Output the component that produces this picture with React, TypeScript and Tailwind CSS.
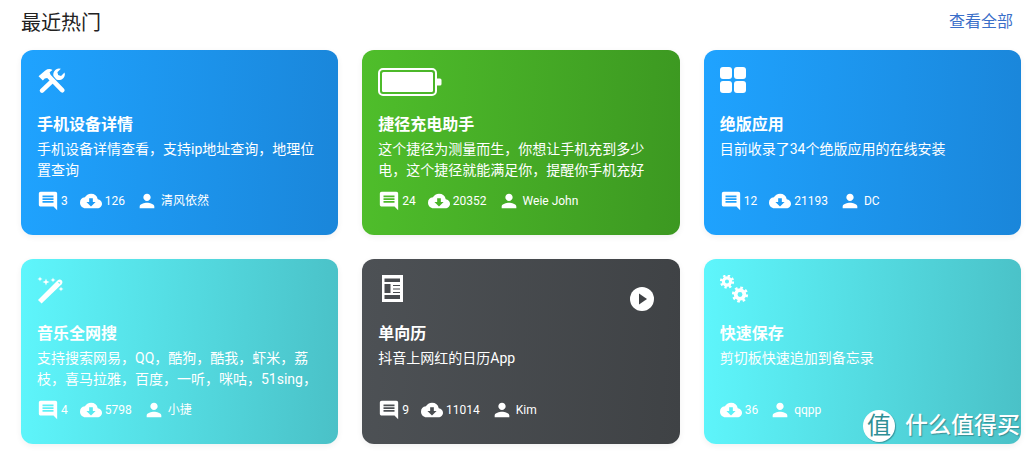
import React from 'react';
import { MdCloudDownload, MdComment, MdPerson } from 'react-icons/md';

const blue = 'bg-[linear-gradient(93deg,#1fa3ff,#1a86da)]';
const green = 'bg-[linear-gradient(93deg,#4fbe2b,#3c9821)]';
const cyan = 'bg-[linear-gradient(93deg,#5ef6fc,#4ac1c7)]';
const dark = 'bg-[linear-gradient(93deg,#4d5155,#3f4245)]';

function ToolsIcon() {
  return (
    <svg className="mt-0.5" width="30" height="25" viewBox="0 0 30 26" fill="white">
      <path d="M1 8.5 8 2.5C10.5.8 13.5.8 15.5 2L12.5 4.5 13.5 7 27.5 21.5C28.5 22.8 28.3 24 27.2 25 26 26 24.8 25.8 23.8 24.8L10 10.5 7.5 11 5.5 13Z" />
      <path d="M2.8 22 14.5 10.8 17.8 14.2 6.2 25.3C5 26.2 3.8 26 3 25.2 2 24.2 1.9 23 2.8 22Z" />
      <path d="M16.5 8.2C15.8 4.5 18.2 1 22.2.6L24.2.8 20.6 4.4 21.4 7.4 24.4 8.2 28 4.6 28.4 6.4C28.2 10.4 24.8 13 21 12.4L19.5 12Z" />
    </svg>
  );
}

function BatteryIcon() {
  return (
    <svg className="mt-0.5" width="64" height="28" viewBox="0 0 64 28">
      <rect x="1" y="1" width="57" height="26" rx="4" fill="none" stroke="white" strokeWidth="2" />
      <rect x="4" y="4" width="51" height="20" rx="1.5" fill="white" />
      <rect x="57.5" y="10.5" width="6" height="7" rx="1.5" fill="white" />
    </svg>
  );
}

function AppsIcon() {
  return (
    <div className="mt-px grid w-[26px] grid-cols-2 gap-[2px]">
      <div className="h-3 rounded-[3px] bg-white" />
      <div className="h-3 rounded-[3px] bg-white" />
      <div className="h-3 rounded-[3px] bg-white" />
      <div className="h-3 rounded-[3px] bg-white" />
    </div>
  );
}

function WandIcon() {
  const star = (x: number, y: number, r: number) =>
    `M${x} ${y - r}L${x + r * 0.25} ${y - r * 0.25}L${x + r} ${y}L${x + r * 0.25} ${y + r * 0.25}L${x} ${y + r}L${x - r * 0.25} ${y + r * 0.25}L${x - r} ${y}L${x - r * 0.25} ${y - r * 0.25}Z`;
  return (
    <svg width="28" height="30" viewBox="0 0 28 30">
      <path d="M1 25 20.5 5.5C21.8 4.4 23.4 4.2 24.6 5.2 25.8 6.4 25.6 8 24.6 9.2L4.6 28.6Z" fill="white" />
      <path d="M21.5 7.2 23 8.4" stroke="#5cf0f6" strokeWidth="1.2" />
      <path d={`${star(3, 4, 2.6)}${star(9, 7, 3.6)}${star(16, 5, 2.6)}${star(24, 14, 2.6)}`} fill="white" />
    </svg>
  );
}

function NewsIcon() {
  return (
    <svg className="ml-1" width="21" height="27" viewBox="0 0 21 27">
      <rect width="21" height="27" fill="white" />
      <g fill="#484b4f">
        <rect x="2.5" y="3.5" width="15.5" height="3.5" />
        <rect x="2.5" y="9" width="6" height="9" />
        <rect x="11" y="10" width="7" height="1" />
        <rect x="11" y="13.5" width="7" height="1" />
        <rect x="11" y="17" width="7" height="1" />
        <rect x="2.5" y="20" width="15.5" height="4" />
      </g>
    </svg>
  );
}

function Gear({ cx, cy, r }: { cx: number; cy: number; r: number }) {
  const dash = (2 * Math.PI * (r + 0.6)) / 16;
  return (
    <g fill="none" stroke="white">
      <circle cx={cx} cy={cy} r={r * 0.72} strokeWidth={r * 0.62} />
      <circle cx={cx} cy={cy} r={r + 0.6} strokeWidth={3} strokeDasharray={`${dash} ${dash}`} />
    </g>
  );
}

function GearsIcon() {
  return (
    <svg width="30" height="30" viewBox="0 0 30 30">
      <Gear cx={7} cy={6.5} r={5} />
      <Gear cx={20} cy={19.5} r={6} />
    </svg>
  );
}

function Stat({ icon, text, className = '', gap = 'ml-[3px]' }: { icon: React.ReactNode; text: string; className?: string; gap?: string }) {
  return (
    <div className={`flex items-center ${className}`.trim()}>
      {icon}
      <span className={`${gap} text-xs`}>{text}</span>
    </div>
  );
}

type CardData = {
  bg: string;
  icon: React.ReactNode;
  title: string;
  desc: string;
  comments?: string;
  downloads: string;
  author: string;
  play?: boolean;
  watermark?: boolean;
};

const cards: CardData[] = [
  {
    bg: blue,
    icon: <ToolsIcon />,
    title: '手机设备详情',
    desc: '手机设备详情查看，支持ip地址查询，地理位置查询',
    comments: '3',
    downloads: '126',
    author: '清风依然',
  },
  {
    bg: green,
    icon: <BatteryIcon />,
    title: '捷径充电助手',
    desc: '这个捷径为测量而生，你想让手机充到多少电，这个捷径就能满足你，提醒你手机充好',
    comments: '24',
    downloads: '20352',
    author: 'Weie John',
  },
  {
    bg: blue,
    icon: <AppsIcon />,
    title: '绝版应用',
    desc: '目前收录了34个绝版应用的在线安装',
    comments: '12',
    downloads: '21193',
    author: 'DC',
  },
  {
    bg: cyan,
    icon: <WandIcon />,
    title: '音乐全网搜',
    desc: '支持搜索网易，QQ，酷狗，酷我，虾米，荔枝，喜马拉雅，百度，一听，咪咕，51sing，',
    comments: '4',
    downloads: '5798',
    author: '小捷',
  },
  {
    bg: dark,
    icon: <NewsIcon />,
    title: '单向历',
    desc: '抖音上网红的日历App',
    comments: '9',
    downloads: '11014',
    author: 'Kim',
    play: true,
  },
  {
    bg: cyan,
    icon: <GearsIcon />,
    title: '快速保存',
    desc: '剪切板快速追加到备忘录',
    downloads: '36',
    author: 'qqpp',
    watermark: true,
  },
];

function Watermark() {
  return (
    <div className="absolute bottom-[2px] right-px flex items-center gap-[10px]">
      <div className="flex h-8 w-8 items-center justify-center rounded-full bg-white text-2xl leading-none text-[#2f8f96] shadow-[1px_1px_1px_#3a9aa0]">
        值
      </div>
      <span className="text-[23px] font-medium leading-8 text-white [text-shadow:1px_1px_1px_#3a8f95]">
        什么值得买
      </span>
    </div>
  );
}

function Card({ card }: { card: CardData }) {
  return (
    <div className={`${card.bg} relative h-[185px] overflow-hidden rounded-xl px-4 pt-4 text-white shadow-[0_2px_6px_rgba(0,0,0,0.06)]`}>
      <div className="flex h-[49px] items-start">{card.icon}</div>
      <h3 className="text-base font-bold leading-5">{card.title}</h3>
      <p className="mt-1 h-[42px] overflow-hidden text-sm leading-[21px]">{card.desc}</p>
      <div className="mt-[9px] flex items-center gap-[11px]">
        {card.comments && <Stat className="mr-px" icon={<MdComment size={22} />} text={card.comments} gap="ml-[2px]" />}
        <Stat icon={<MdCloudDownload size={22} />} text={card.downloads} />
        <Stat icon={<MdPerson size={22} />} text={card.author} />
      </div>
      {card.play && (
        <svg className="absolute right-[26px] top-[28px]" width="24" height="24" viewBox="0 0 24 24">
          <circle cx="12" cy="12" r="12" fill="white" />
          <path d="M9 6.5 17 12 9 17.5Z" fill="#3f4245" />
        </svg>
      )}
      {card.watermark && <Watermark />}
    </div>
  );
}

export default function App() {
  return (
    <div className="h-[453px] w-[1033px] overflow-hidden bg-white pl-[21px] pr-3 [font-family:Roboto,'Noto_Sans_CJK_SC',sans-serif]">
      <div className="flex h-[50px] items-start justify-between pt-[9px]">
        <h2 className="text-xl leading-7 text-[#222]">最近热门</h2>
        <a className="mr-2 mt-px text-base leading-6 text-[#3b6fc9]">查看全部</a>
      </div>
      <div className="grid grid-cols-3 gap-6">
        {cards.map((card) => (
          <Card key={card.title} card={card} />
        ))}
      </div>
    </div>
  );
}
